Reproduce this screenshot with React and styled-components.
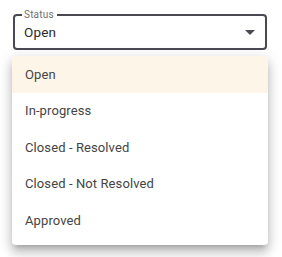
import React from 'react'
import styled, { createGlobalStyle } from 'styled-components'

const GlobalStyle = createGlobalStyle`
  body {
    margin: 0;
    background: #ffffff;
    font-family: Roboto, "Liberation Sans", sans-serif;
  }
`

const Page = styled.div`
  width: 282px;
  height: 257px;
  padding-top: 9px;
  box-sizing: border-box;
`

const Field = styled.fieldset`
  margin: 0 0 0 13px;
  width: 254px;
  box-sizing: border-box;
  padding: 0 10px 0 7px;
  border: 2px solid #4a4951;
  border-radius: 4px;
`

const Legend = styled.legend`
  padding: 0 3px 0 2px;
  font-size: 10px;
  line-height: 12px;
  color: #707070;
  letter-spacing: 0.2px;
`

const ValueRow = styled.div`
  display: flex;
  align-items: center;
  justify-content: space-between;
  height: 22px;
  padding: 0 0 5px 2px;
`

const Value = styled.span`
  font-size: 13.5px;
  color: #2a2a2a;
  letter-spacing: 0.15px;
`

const Menu = styled.ul`
  list-style: none;
  margin: 6px 0 0 12px;
  padding: 0 0 6px;
  width: 256px;
  background: #ffffff;
  border-radius: 4px;
  box-shadow: 0px 5px 5px -3px rgba(0, 0, 0, 0.2),
    0px 8px 10px 1px rgba(0, 0, 0, 0.14), 0px 3px 14px 2px rgba(0, 0, 0, 0.12);
  overflow: hidden;
`

const Item = styled.li`
  display: flex;
  align-items: center;
  height: 36.5px;
  padding-left: 13px;
  font-size: 13px;
  letter-spacing: 0.1px;
  color: #444444;
  background: ${(p) => (p.selected ? '#fdf6e8' : 'transparent')};
`

const options = [
  'Open',
  'In-progress',
  'Closed - Resolved',
  'Closed - Not Resolved',
  'Approved',
]

function Arrow() {
  return (
    <svg width="10" height="5" viewBox="0 0 10 5">
      <path d="M0 0l5 5 5-5z" fill="#4a4951" />
    </svg>
  )
}

export default function App() {
  const value = 'Open'
  return (
    <Page>
      <GlobalStyle />
      <Field>
        <Legend>Status</Legend>
        <ValueRow>
          <Value>{value}</Value>
          <Arrow />
        </ValueRow>
      </Field>
      <Menu>
        {options.map((o) => (
          <Item key={o} selected={o === value}>
            {o}
          </Item>
        ))}
      </Menu>
    </Page>
  )
}
